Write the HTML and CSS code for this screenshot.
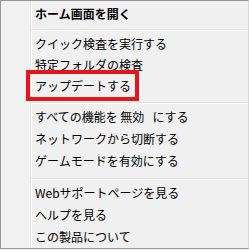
FILE: index.html
```html
<!DOCTYPE html>
<html lang="ja">
<head>
<meta charset="utf-8">
<title>メニュー</title>
<link rel="stylesheet" href="styles.css">
</head>
<body>
<div class="menu">
  <div class="gutter"></div>
  <div class="list">
    <div class="item head">ホーム画面を開く</div>
    <div class="sep"></div>
    <div class="group tight">
      <div class="item">クイック検査を実行する</div>
      <div class="item">特定フォルダの検査</div>
      <div class="item marked">アップデートする<span class="mark"></span></div>
    </div>
    <div class="sep"></div>
    <div class="group">
      <div class="item">すべての機能を 無効&nbsp;&nbsp;&nbsp;にする</div>
      <div class="item">ネットワークから切断する</div>
      <div class="item">ゲームモードを有効にする</div>
    </div>
    <div class="sep"></div>
    <div class="group">
      <div class="item">Webサポートページを見る</div>
      <div class="item">ヘルプを見る</div>
      <div class="item">この製品について</div>
    </div>
  </div>
</div>
</body>
</html>
```
FILE: styles.css
```css
html, body {
  margin: 0;
  padding: 0;
  background: #f0f0f0;
}

.menu {
  display: flex;
  width: 249px;
  height: 249px;
  box-sizing: border-box;
  border: 1px solid #979797;
  border-right-color: #d8d8d8;
  background: #f0f0f0;
  font-family: "Noto Sans CJK JP", "Noto Sans", sans-serif;
  font-size: 12px;
  color: #000;
}

.gutter {
  width: 29px;
  flex: none;
  background: #f1f1f1;
}

.list {
  flex: 1;
  border-left: 1px solid #e2e3e3;
  box-shadow: inset 1px 0 0 #ffffff;
}

.item {
  height: 22px;
  line-height: 22px;
  padding-left: 4px;
  white-space: nowrap;
}

.tight .item {
  height: 21px;
  line-height: 21px;
}

.head {
  font-weight: bold;
  height: 20px;
  padding-top: 2px;
}

.sep {
  height: 1px;
  margin: 6px 0 2px;
  background: #e0e0e0;
  border-bottom: 1px solid #ffffff;
}

.marked {
  position: relative;
}

.mark {
  position: absolute;
  left: -5px;
  top: -5px;
  width: 113px;
  height: 31px;
  box-sizing: border-box;
  border: 4px solid #e8141c;
}
```
